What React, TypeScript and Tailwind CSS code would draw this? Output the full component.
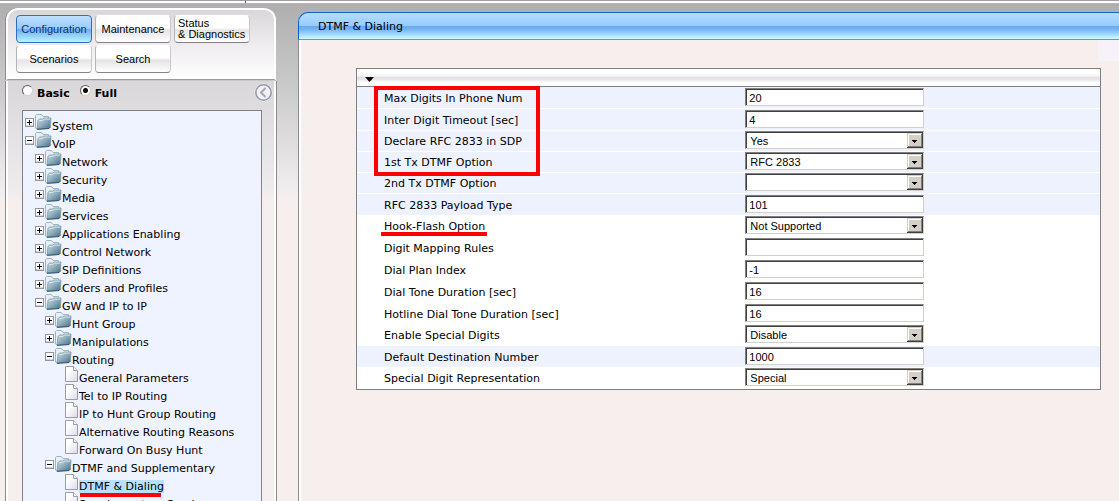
import { useState } from "react";
import clsx from "clsx";

type TreeNode = {
  label: string;
  level: number;
  kind: "open" | "closed" | "page";
};

type Field = {
  id: string;
  label: string;
  type: "text" | "select";
  value: string;
  shaded?: boolean;
  marked?: boolean;
};

const tabs = ["Configuration", "Maintenance", "Status & Diagnostics", "Scenarios", "Search"];

const tree: TreeNode[] = [
  { label: "System", level: 0, kind: "closed" },
  { label: "VoIP", level: 0, kind: "open" },
  { label: "Network", level: 1, kind: "closed" },
  { label: "Security", level: 1, kind: "closed" },
  { label: "Media", level: 1, kind: "closed" },
  { label: "Services", level: 1, kind: "closed" },
  { label: "Applications Enabling", level: 1, kind: "closed" },
  { label: "Control Network", level: 1, kind: "closed" },
  { label: "SIP Definitions", level: 1, kind: "closed" },
  { label: "Coders and Profiles", level: 1, kind: "closed" },
  { label: "GW and IP to IP", level: 1, kind: "open" },
  { label: "Hunt Group", level: 2, kind: "closed" },
  { label: "Manipulations", level: 2, kind: "closed" },
  { label: "Routing", level: 2, kind: "open" },
  { label: "General Parameters", level: 3, kind: "page" },
  { label: "Tel to IP Routing", level: 3, kind: "page" },
  { label: "IP to Hunt Group Routing", level: 3, kind: "page" },
  { label: "Alternative Routing Reasons", level: 3, kind: "page" },
  { label: "Forward On Busy Hunt", level: 3, kind: "page" },
  { label: "DTMF and Supplementary", level: 2, kind: "open" },
  { label: "DTMF & Dialing", level: 3, kind: "page" },
  { label: "Supplementary Services", level: 3, kind: "page" },
];

const markedFields: Field[] = [
  { id: "max-digits", label: "Max Digits In Phone Num", type: "text", value: "20", shaded: true },
  { id: "inter-digit", label: "Inter Digit Timeout [sec]", type: "text", value: "4", shaded: true },
  { id: "declare-rfc", label: "Declare RFC 2833 in SDP", type: "select", value: "Yes", shaded: true },
  { id: "first-tx", label: "1st Tx DTMF Option", type: "select", value: "RFC 2833", shaded: true },
];

const otherFields: Field[] = [
  { id: "second-tx", label: "2nd Tx DTMF Option", type: "select", value: "", shaded: true },
  { id: "payload", label: "RFC 2833 Payload Type", type: "text", value: "101", shaded: true },
  { id: "hook-flash", label: "Hook-Flash Option", type: "select", value: "Not Supported", marked: true },
  { id: "mapping", label: "Digit Mapping Rules", type: "text", value: "" },
  { id: "dial-plan", label: "Dial Plan Index", type: "text", value: "-1" },
  { id: "dial-tone", label: "Dial Tone Duration [sec]", type: "text", value: "16" },
  { id: "hotline", label: "Hotline Dial Tone Duration [sec]", type: "text", value: "16" },
  { id: "special-digits", label: "Enable Special Digits", type: "select", value: "Disable" },
  { id: "default-dest", label: "Default Destination Number", type: "text", value: "1000", shaded: true },
  { id: "special-rep", label: "Special Digit Representation", type: "select", value: "Special" },
];

const indents = ["pl-[2px]", "pl-[12px]", "pl-[22px]", "pl-[42px]"];

function ToggleIcon({ open }: { open: boolean }) {
  return (
    <svg width="9" height="10" viewBox="0 0 9 10" className="mt-1 shrink-0" shapeRendering="crispEdges">
      <rect x="0.5" y="0.5" width="8" height="8" rx="1" fill="#fff" stroke="#8f96a3" />
      <path d="M1 7.5h7" stroke="#d6d3cc" />
      <path d="M2 4.5h5" stroke="#000" />
      {!open && <path d="M4.5 2v5" stroke="#000" />}
    </svg>
  );
}

function FolderIcon() {
  return (
    <svg width="17" height="16" viewBox="0 0 17 16" className="ml-px shrink-0">
      <defs>
        <linearGradient id="folder" x1="0" y1="0" x2="1" y2="1">
          <stop offset="0" stopColor="#d3e2ea" />
          <stop offset="0.5" stopColor="#8aa9b9" />
          <stop offset="1" stopColor="#426b80" />
        </linearGradient>
      </defs>
      <path d="M0.5 14V1.5L1.5 0.5h5L8 2.5h5.5V13L2 15z" fill="#e7f0f5" stroke="#9cb5c3" />
      <path d="M3 6.5L4.5 5h3L9 4h7L15.3 13 14 14.5l-12 1z" fill="url(#folder)" stroke="#7897a7" strokeWidth="0.8" />
      <path d="M2 15.2l12-0.7 1.6-1.7" fill="none" stroke="#31586b" />
      <path d="M4.2 6.7l4-0.6 1.2-1h6" fill="none" stroke="#e8f2f7" strokeWidth="0.8" />
    </svg>
  );
}

function PageIcon() {
  return (
    <svg width="14" height="16" viewBox="0 0 14 16" className="shrink-0">
      <defs>
        <linearGradient id="page" x1="0" y1="0" x2="1" y2="1">
          <stop offset="0.3" stopColor="#fff" />
          <stop offset="1" stopColor="#d9daea" />
        </linearGradient>
      </defs>
      <path d="M0.5 0.5h8l4 4v11h-12z" fill="url(#page)" stroke="#9b9ca6" />
      <path d="M8.5 0.5v4h4" fill="#fff" stroke="#9b9ca6" />
    </svg>
  );
}

function TreeRow({ node, selected, onSelect }: { node: TreeNode; selected: boolean; onSelect: () => void }) {
  return (
    <li className={clsx("flex h-[18px] items-start", indents[node.level])}>
      {node.kind === "page" ? (
        <PageIcon />
      ) : (
        <>
          <ToggleIcon open={node.kind === "open"} />
          <FolderIcon />
        </>
      )}
      <a
        href="#"
        onClick={(e) => {
          e.preventDefault();
          onSelect();
        }}
        className={clsx("relative mt-[6px] h-[13px] whitespace-nowrap leading-[14px]", selected && "bg-[#b8e0ff]")}
      >
        {node.label}
        {selected && <span className="absolute top-[13px] right-[3px] left-px h-1 bg-[#ff0000]" />}
      </a>
    </li>
  );
}

function FieldRow({ field }: { field: Field }) {
  const box =
    "h-[18px] w-full appearance-none rounded-none border border-t-[#808080] border-l-[#808080] border-r-[#d4d0c8] border-b-[#d4d0c8] bg-white font-['Liberation_Sans'] text-[11px] leading-4 text-black shadow-[inset_1px_1px_0_#404040] outline-none";

  return (
    <div
      className={clsx(
        "grid grid-cols-[52fr_48fr] items-start border-b border-white",
        field.type === "text" ? "h-[22px] pt-px" : "h-[21px]",
        field.shaded ? "bg-[#eef2ff]" : "bg-white",
      )}
    >
      <label htmlFor={field.id} className="pl-[27px] leading-[21px]">
        <span className="relative">
          {field.label}
          {field.marked && <span className="absolute top-3 -right-[2px] -left-[3px] h-1 bg-[#ff0000]" />}
        </span>
      </label>
      <div className="relative ml-[2px] w-[179px]">
        {field.type === "text" ? (
          <input id={field.id} type="text" defaultValue={field.value} className={clsx(box, "px-[3px] pt-px")} />
        ) : (
          <>
            <select id={field.id} defaultValue={field.value} className={clsx(box, "pt-px pl-1")}>
              <option value={field.value}>{field.value}</option>
            </select>
            <svg
              width="16"
              height="15"
              viewBox="0 0 16 15"
              className="pointer-events-none absolute top-[2px] right-px"
              shapeRendering="crispEdges"
            >
              <rect width="16" height="15" fill="#404040" />
              <rect width="15" height="14" fill="#d4d0c8" />
              <path d="M1.5 13V1.5H14" fill="none" stroke="#fff" />
              <path d="M14.5 1v12.5H1" fill="none" stroke="#808080" />
              <path d="M5 7h5v1h-1v1h-1v1h-1v-1h-1v-1h-1z" fill="#000" />
            </svg>
          </>
        )}
      </div>
    </div>
  );
}

export default function App() {
  const [activeTab, setActiveTab] = useState("Configuration");
  const [mode, setMode] = useState("Full");
  const [page, setPage] = useState("DTMF & Dialing");

  return (
    <div className="flex h-screen flex-col overflow-hidden bg-[#f7eeee] bg-linear-to-b from-[#adadad] via-[#f0eeee] via-[190px] to-[#f7eeee] to-[200px] font-['DejaVu_Sans',sans-serif] text-[11px] text-black">
      <div className="h-1 shrink-0 border-y border-t-[#a09da3] border-b-[#b9b5b9] bg-white">
        <div className="h-[2px] w-[246px] border-r border-[#4c5670]" />
      </div>

      <div className="flex min-h-0 flex-1">
        <aside className="mt-1 ml-[6px] flex w-[270px] shrink-0 flex-col">
          <nav className="h-[72px] shrink-0 rounded-t-xl border-2 border-b border-white border-b-[#9b9b9b] bg-linear-to-b from-[#d9d7d9] via-[#eeecee] to-white pt-[5px] pl-2 shadow-[-1px_0_0_#8c8c8c]">
            <div className="flex flex-wrap gap-x-[3px] gap-y-[2px]">
              {tabs.map((tab) => (
                <button
                  key={tab}
                  type="button"
                  onClick={() => setActiveTab(tab)}
                  className={clsx(
                    "h-7 w-[76px] rounded border font-['Liberation_Sans'] text-[11px] leading-[11px]",
                    tab.startsWith("Status") ? "pl-[3px] text-left" : "text-center",
                    tab === activeTab
                      ? "border-[#2a6fc9] bg-[linear-gradient(#bfe0ff,#98caff_48%,#72adf0_52%,#b8f4ff)] text-[#0b3568]"
                      : "border-t-white border-r-[#c9c7c9] border-b-[#858385] border-l-[#b5b3b5] bg-linear-to-b from-white from-45% via-[#e6e4e6] via-55% to-white",
                  )}
                >
                  {tab.startsWith("Status") ? (
                    <>
                      Status
                      <br />
                      <span className="whitespace-nowrap">&amp; Diagnostics</span>
                    </>
                  ) : (
                    tab
                  )}
                </button>
              ))}
            </div>
          </nav>

          <div className="mt-px flex min-h-0 flex-1 flex-col border-r-2 border-l-2 border-white bg-linear-to-b from-[#d9d7d9] via-[#efecee] via-[110px] to-[#f7eeee] to-[120px] shadow-[-1px_0_0_#8c8c8c,1px_0_0_#8c8c8c]">
            <div className="flex h-[29px] shrink-0 items-start pt-px pl-[14px] font-bold">
              {["Basic", "Full"].map((m) => (
                <label key={m} className="mr-[10px] flex items-start">
                  <input
                    type="radio"
                    name="mode"
                    checked={mode === m}
                    onChange={() => setMode(m)}
                    className="mt-[3px] mr-1 h-[11px] w-[11px] appearance-none rounded-full border border-t-[#606060] border-r-[#d4d0c8] border-b-[#d4d0c8] border-l-[#606060] bg-white checked:bg-[radial-gradient(circle,#000_2px,#fff_3px)]"
                  />
                  <span className="mt-[5px] leading-[14px]">{m}</span>
                </label>
              ))}
              <button type="button" aria-label="Hide menu" className="mt-px mr-px ml-auto">
                <svg width="19" height="19" viewBox="0 0 19 19">
                  <circle cx="9.5" cy="9.5" r="9" fill="#f4f4f8" />
                  <circle cx="9.5" cy="9.5" r="7.7" fill="#f1f1f6" stroke="#9697ac" strokeWidth="1.6" />
                  <path d="M11.5 5L7 9.5l4.5 4.5" fill="none" stroke="#a6a6b4" strokeWidth="2" />
                </svg>
              </button>
            </div>

            <div className="mr-3 ml-[14px] min-h-0 flex-1 overflow-hidden border border-b-0 border-[#80808a] bg-[#eff2ff]">
              <ul className="pt-[3px]">
                {tree.map((node) => (
                  <TreeRow
                    key={node.label}
                    node={node}
                    selected={node.label === page}
                    onSelect={() => setPage(node.label)}
                  />
                ))}
              </ul>
            </div>
          </div>
        </aside>

        <main className="mt-2 ml-[22px] flex min-w-0 flex-1 flex-col">
          <h1 className="h-7 shrink-0 rounded-tl-[10px] border-t border-b border-l border-[#0b62c9] border-b-[#7f9594] bg-[linear-gradient(#b4deff,#98ccff_48%,#68a8ee_50%,#74b2f4_62%,#c9fdff)] pl-[19px] leading-7">
            DTMF &amp; Dialing
          </h1>
          <div className="flex-1 border-l border-[#8c8c8c] bg-[#f7eeee] shadow-[inset_2px_0_0_#fff]">
            <div className="ml-auto h-[21px] w-[21px] bg-[#f7f2f8]" />

            <section className="mt-[7px] mr-[18px] ml-[57px] border border-[#808080] bg-white">
              <button
                type="button"
                aria-label="Collapse section"
                className="flex h-[18px] w-full items-center border-b border-[#808080] bg-[linear-gradient(#fff_25%,#f0eff0_45%,#e2e0e2_50%,#e8e6e8_62%,#fff_80%)] pl-2"
              >
                <svg width="9" height="5" viewBox="0 0 9 5" className="mt-1">
                  <path d="M0 0h9L4.5 5z" fill="#000" />
                </svg>
              </button>
              <div className="relative">
                {markedFields.map((field) => (
                  <FieldRow key={field.id} field={field} />
                ))}
                <div className="pointer-events-none absolute -top-px -bottom-[3px] left-[17px] w-[166px] border-4 border-[#ff0000]" />
              </div>
              {otherFields.map((field) => (
                <FieldRow key={field.id} field={field} />
              ))}
            </section>
          </div>
        </main>
      </div>
    </div>
  );
}
